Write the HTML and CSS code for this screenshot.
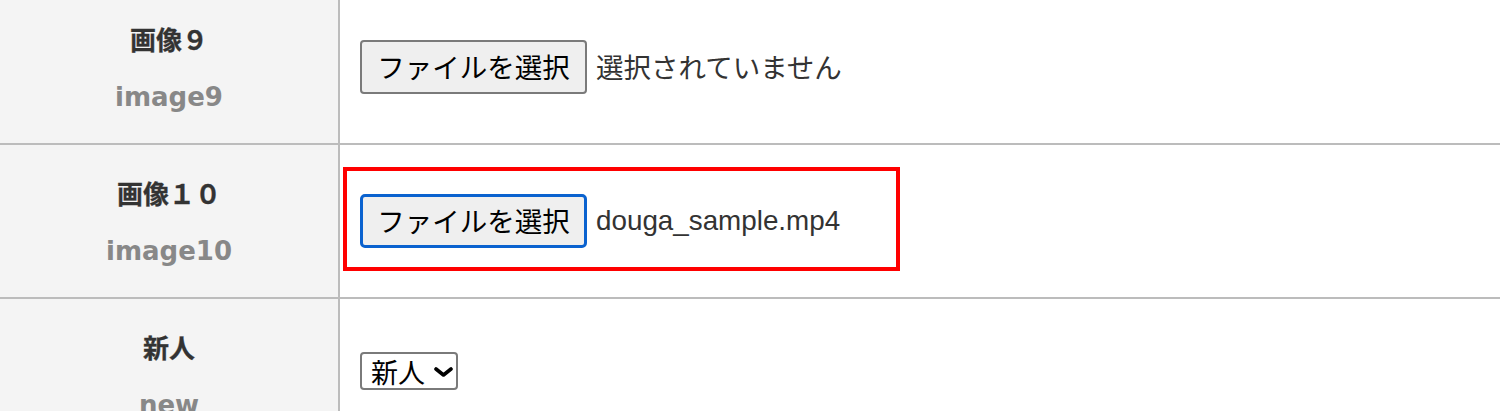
FILE: index.html
```html
<!DOCTYPE html>
<html lang="ja">
<head>
<meta charset="utf-8">
<link rel="stylesheet" href="styles.css">
</head>
<body>
<div class="form-table">
  <div class="row">
    <div class="label-cell">
      <div class="label-title">画像９</div>
      <div class="label-sub">image9</div>
    </div>
    <div class="value-cell">
      <span class="file-btn">ファイルを選択</span>
      <span class="file-name">選択されていません</span>
    </div>
  </div>
  <div class="row">
    <div class="label-cell">
      <div class="label-title">画像１０</div>
      <div class="label-sub">image10</div>
    </div>
    <div class="value-cell">
      <div class="highlight">
        <span class="file-btn focused">ファイルを選択</span>
        <span class="file-name latin">douga_sample.mp4</span>
      </div>
    </div>
  </div>
  <div class="row">
    <div class="label-cell">
      <div class="label-title">新人</div>
      <div class="label-sub">new</div>
    </div>
    <div class="value-cell">
      <span class="select-box">新人<svg class="chev" width="19" height="10" viewBox="0 0 19 10"><path d="M2 2 L9.5 8 L17 2" fill="none" stroke="#000" stroke-width="3.6" stroke-linecap="round" stroke-linejoin="round"/></svg></span>
    </div>
  </div>
</div>
</body>
</html>
```

FILE: styles.css
```css
html, body {
  margin: 0;
  padding: 0;
  background: #fff;
  overflow: hidden;
}

body {
  font-family: "Noto Sans CJK JP", sans-serif;
}

.form-table {
  margin-top: -9px;
}

.row {
  display: grid;
  grid-template-columns: 340px 1fr;
  height: 154px;
  box-sizing: border-box;
  border-bottom: 2px solid #bcbcbc;
}

.label-cell {
  background: #f4f4f4;
  border-right: 2px solid #bcbcbc;
  display: flex;
  flex-direction: column;
  align-items: center;
  justify-content: center;
  gap: 32px;
  padding-top: 2px;
}

.label-title {
  font-family: "Noto Sans CJK JP", sans-serif;
  font-weight: 700;
  font-size: 26px;
  line-height: 26px;
  color: #333;
  -webkit-text-stroke: 0.3px #333;
}

.label-sub {
  font-family: "DejaVu Sans", "Noto Sans CJK JP", sans-serif;
  font-weight: 700;
  font-size: 26px;
  line-height: 26px;
  color: #888;
}

.value-cell {
  display: flex;
  align-items: center;
  padding-left: 20px;
}

.file-btn {
  box-sizing: border-box;
  width: 227px;
  height: 54px;
  display: inline-flex;
  align-items: center;
  justify-content: center;
  background: #efefef;
  border: 2px solid #7a7a7a;
  border-radius: 4px;
  font-size: 27.5px;
  color: #000;
  line-height: 1;
}

.file-btn.focused {
  border: 3px solid #0a62cf;
  border-radius: 5px;
}

.file-name {
  margin-left: 9px;
  font-size: 27.5px;
  color: #333;
  line-height: 1;
}

.file-name.latin {
  font-family: "Liberation Sans", "Noto Sans CJK JP", sans-serif;
  font-size: 27.8px;
}

.highlight {
  box-sizing: border-box;
  width: 549px;
  height: 96px;
  margin-left: -13px;
  margin-bottom: 4px;
  padding-left: 13px;
  padding-top: 4px;
  display: flex;
  align-items: center;
  outline: 4px solid #ff0000;
}

.select-box {
  box-sizing: border-box;
  width: 98px;
  height: 38px;
  margin-bottom: 8px;
  display: inline-flex;
  align-items: center;
  padding-left: 9px;
  gap: 9px;
  border: 2px solid #7a7a7a;
  border-radius: 4px;
  font-size: 27px;
  line-height: 1;
  color: #000;
  background: #fff;
}

.chev {
  display: block;
  margin-top: 2px;
}
```
